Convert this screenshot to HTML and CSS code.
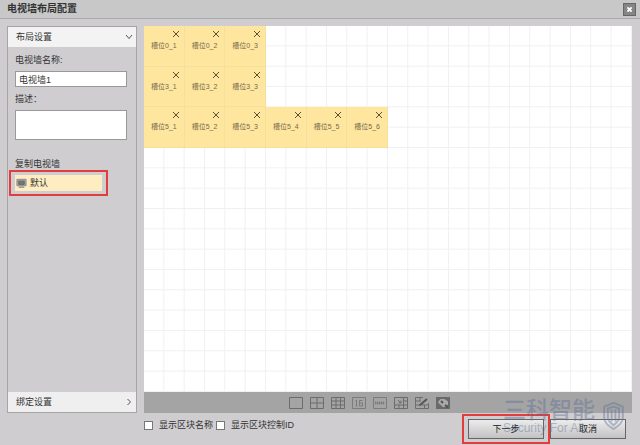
FILE: index.html
```html
<!doctype html>
<html lang="zh-CN">
<head>
  <meta charset="utf-8">
  <title>电视墙布局配置</title>
  <link rel="stylesheet" href="styles.css">
</head>
<body>
  <div class="dialog">
    <header class="titlebar">
      <h1>电视墙布局配置</h1>
      <button type="button" class="close" aria-label="关闭">
        <svg viewBox="0 0 12 12"><path d="M3.7 3.7l4.6 4.6M8.3 3.7L3.7 8.3"/></svg>
      </button>
    </header>

    <div class="main">
      <aside class="sidebar">
        <button type="button" class="section open">布局设置
          <svg viewBox="0 0 8 8"><path d="M1 2l3 3.5L7 2"/></svg>
        </button>
        <form class="settings">
          <label for="wallName">电视墙名称:</label>
          <input type="text" id="wallName" value="电视墙1">
          <label for="wallDesc">描述：</label>
          <textarea id="wallDesc"></textarea>
          <p class="copyLabel">复制电视墙</p>
          <div class="copyList marked">
            <button type="button" class="copyItem">
              <svg viewBox="0 0 12 10"><path class="screen" d="M1 1h10v7H1z"/><path class="lines" d="M3 3h6v3.500H3zM3 9.500h6"/></svg>
              默认
            </button>
          </div>
        </form>
        <button type="button" class="section">绑定设置
          <svg viewBox="0 0 8 8"><path d="M2.5 1L5.5 4l-3 3"/></svg>
        </button>
      </aside>

      <section class="wall">
        <div class="grid">
          <div class="slot first"><button type="button" aria-label="删除"><svg viewBox="0 0 8 8"><path d="M1 1l6 6M7 1L1 7"/></svg></button><span>槽位0_1</span></div>
          <div class="slot"><button type="button" aria-label="删除"><svg viewBox="0 0 8 8"><path d="M1 1l6 6M7 1L1 7"/></svg></button><span>槽位0_2</span></div>
          <div class="slot"><button type="button" aria-label="删除"><svg viewBox="0 0 8 8"><path d="M1 1l6 6M7 1L1 7"/></svg></button><span>槽位0_3</span></div>

          <div class="slot first"><button type="button" aria-label="删除"><svg viewBox="0 0 8 8"><path d="M1 1l6 6M7 1L1 7"/></svg></button><span>槽位3_1</span></div>
          <div class="slot"><button type="button" aria-label="删除"><svg viewBox="0 0 8 8"><path d="M1 1l6 6M7 1L1 7"/></svg></button><span>槽位3_2</span></div>
          <div class="slot"><button type="button" aria-label="删除"><svg viewBox="0 0 8 8"><path d="M1 1l6 6M7 1L1 7"/></svg></button><span>槽位3_3</span></div>

          <div class="slot first"><button type="button" aria-label="删除"><svg viewBox="0 0 8 8"><path d="M1 1l6 6M7 1L1 7"/></svg></button><span>槽位5_1</span></div>
          <div class="slot"><button type="button" aria-label="删除"><svg viewBox="0 0 8 8"><path d="M1 1l6 6M7 1L1 7"/></svg></button><span>槽位5_2</span></div>
          <div class="slot"><button type="button" aria-label="删除"><svg viewBox="0 0 8 8"><path d="M1 1l6 6M7 1L1 7"/></svg></button><span>槽位5_3</span></div>
          <div class="slot"><button type="button" aria-label="删除"><svg viewBox="0 0 8 8"><path d="M1 1l6 6M7 1L1 7"/></svg></button><span>槽位5_4</span></div>
          <div class="slot"><button type="button" aria-label="删除"><svg viewBox="0 0 8 8"><path d="M1 1l6 6M7 1L1 7"/></svg></button><span>槽位5_5</span></div>
          <div class="slot"><button type="button" aria-label="删除"><svg viewBox="0 0 8 8"><path d="M1 1l6 6M7 1L1 7"/></svg></button><span>槽位5_6</span></div>
        </div>

        <div class="toolbar">
          <button type="button" aria-label="1 分屏"><svg viewBox="0 0 14 12"><path d="M.5 .5h13v11H.5z"/></svg></button>
          <button type="button" aria-label="4 分屏"><svg viewBox="0 0 14 12"><path d="M.5 .5h13v11H.5zM7 .5v11M.5 6h13"/></svg></button>
          <button type="button" aria-label="9 分屏"><svg viewBox="0 0 14 12"><path d="M.5 .5h13v11H.5zM5 .5v11M9.500 .5v11M.5 4h13M.5 8h13"/></svg></button>
          <button type="button" aria-label="16 分屏"><svg viewBox="0 0 14 12"><path class="thin" d="M.5 .5h13v11H.5zM4.500 3v6M3.500 3.500h1M3.500 9h2M10.500 3.500h-3v5.500h3V6h-3"/></svg></button>
          <button type="button" aria-label="自定义分屏"><svg viewBox="0 0 14 12"><path class="thin" d="M.5 .5h13v11H.5zM2.500 4.500v3M4.500 4.500v3M6.500 4.500v3M8.500 4.500v3M10.500 4.500v3M2.500 6h9"/></svg></button>
          <button type="button" aria-label="合并"><svg viewBox="0 0 14 12"><path d="M.5 .5h13v11H.5zM9.500 .5v11M5 8v3.500M.5 8h13M9.500 4h4M4 3l3 3M7 3.500V6H4.500"/></svg></button>
          <button type="button" aria-label="编辑"><svg viewBox="0 0 14 12"><path d="M8 .5H.5v11h13V6M5 .5v4M.5 4h5M.5 8h4M9.500 8v3.500M7 8h6.500"/><path class="bold" d="M4.500 8.500L12 2"/></svg></button>
          <button type="button" aria-label="清空"><svg viewBox="0 0 14 12"><path class="fill" d="M0 0h14v12H0z"/><path class="cut" d="M2 5l2.500-3h4L12 4.500v3L9 10H7L3 6.500z"/><path class="bold" d="M5 4l2 2M9 8l3 2.500"/></svg></button>
        </div>
      </section>
    </div>

    <footer class="footer">
      <div class="options">
        <input type="checkbox" id="showName"><label for="showName">显示区块名称</label>
        <input type="checkbox" id="showId"><label for="showId">显示区块控制ID</label>
      </div>
      <div class="actions">
        <div class="marked"><button type="button">下一步</button></div>
        <button type="button">取消</button>
      </div>
    </footer>

    <div class="watermark">
      <div>
        <strong>三科智能</strong>
        <small>Security For All</small>
      </div>
      <svg viewBox="0 0 24 30"><path d="M12 1l10 4v12c0 5-4 8-10 12C6 25 2 22 2 17V5z"/><path d="M12 5l6 2v10c0 3-2 5-6 8-4-3-6-5-6-8V7zM10 8v13M14 8v13"/></svg>
    </div>
  </div>
</body>
</html>
```

FILE: styles.css
```css
* {
  box-sizing: border-box;
}

body {
  margin: 0;
  background: #cfcdcf;
  color: #333;
  font: 9px/12px "Liberation Sans", "Noto Sans CJK SC", sans-serif;
}

button, input, textarea {
  font: inherit;
  color: inherit;
  margin: 0;
}

button {
  padding: 0;
  border: 0;
  background: none;
}

svg {
  display: block;
  fill: none;
  stroke: #555;
}

.dialog {
  position: relative;
  display: flex;
  flex-direction: column;
  min-height: 100vh;
}

.titlebar {
  display: flex;
  justify-content: space-between;
  align-items: center;
  height: 19px;
  padding: 0 4px 0 7px;
  background: #c8c8c8;
  border-bottom: 1px solid #aaa;
}

.titlebar h1 {
  margin: 0;
  font-size: 10px;
  line-height: 16px;
}

.close {
  width: 13px;
  height: 13px;
  border: 1px solid #666;
  background: #858585;
}

.close svg {
  stroke: #fff;
  stroke-width: 2;
}

.main {
  flex: 1;
  display: flex;
  gap: 7px;
  padding: 7px 8px 0 7px;
}

/* left panel */

.sidebar {
  flex: 0 0 130px;
  display: flex;
  flex-direction: column;
  border: 1px solid #a5a5a7;
}

.section {
  display: flex;
  justify-content: space-between;
  align-items: center;
  height: 20px;
  padding: 0 3px 0 8px;
  background: #efeff0;
}

.section.open {
  background: #f3f3f3;
}

.section svg {
  width: 8px;
  height: 8px;
}

.settings {
  flex: 1;
  display: flex;
  flex-direction: column;
  padding: 7px 9px 0 7px;
}

.settings label {
  margin-bottom: 5px;
}

.settings input,
.settings textarea {
  width: 100%;
  border: 1px solid #999;
  background: #fff;
  border-radius: 0;
}

.settings input {
  height: 16px;
  padding: 0 3px;
  margin-bottom: 6px;
}

.settings textarea {
  height: 30px;
  resize: none;
  margin-bottom: 18px;
}

.copyLabel {
  margin: 0 0 5px;
}

/* red frame that draws attention to a control */
.marked {
  position: relative;
}

.marked::after {
  content: "";
  position: absolute;
  inset: -5px -6px;
  border: 2px solid #e23c3c;
  pointer-events: none;
}

.copyList {
  width: 87px;
}

.copyItem {
  display: flex;
  align-items: center;
  gap: 3px;
  width: 100%;
  height: 16px;
  padding: 0 1px;
  background: #feedc0;
}

.copyItem svg {
  width: 11px;
  height: 10px;
}

.screen {
  fill: #aaa;
  stroke: #888;
}

.lines {
  fill: #777;
  stroke: #666;
}

/* wall canvas, 12 x 9 slots */

.wall {
  flex: 1;
  display: flex;
  flex-direction: column;
}

.grid {
  flex: 1;
  display: grid;
  grid-template-columns: repeat(12, 1fr);
  grid-template-rows: repeat(9, 1fr);
  background-color: #fff;
  background-image:
    linear-gradient(to left, #f0f0f1 1px, transparent 1px),
    linear-gradient(to top, #f0f0f1 1px, transparent 1px);
  background-size: calc(100% / 24) calc(100% / 18);
}

.slot {
  display: flex;
  flex-direction: column;
  background: #ffe69f;
  border-right: 1px solid #f6df9c;
  border-bottom: 1px solid #f6df9c;
  color: #756a4c;
  font-size: 7px;
  line-height: 10px;
  text-align: center;
}

.slot.first {
  grid-column-start: 1;
}

.slot button {
  align-self: flex-end;
  margin: 4px 4px 3px 0;
}

.slot svg {
  width: 8px;
  height: 8px;
  stroke: #5b5138;
}

.toolbar {
  display: flex;
  justify-content: center;
  align-items: center;
  gap: 7px;
  height: 21px;
  padding-right: 38px;
  background: #a4a4a5;
}

.toolbar svg {
  width: 14px;
  height: 12px;
  stroke: #6c6c6c;
}

.toolbar .thin {
  stroke: #7c7c7c;
}

.toolbar .bold {
  stroke: #555;
  stroke-width: 2;
}

.toolbar .fill {
  fill: #6a6a6a;
  stroke: none;
}

.toolbar .cut {
  fill: #aaa;
  stroke: none;
}

/* bottom bar */

.footer {
  display: flex;
  justify-content: space-between;
  padding: 6px 14px 6px 144px;
}

.options {
  display: flex;
  align-items: center;
  height: 12px;
}

.options input {
  appearance: none;
  width: 9px;
  height: 9px;
  margin-right: 6px;
  border: 1px solid #777;
  background: #fff;
}

.options label {
  margin-right: 3px;
}

.actions {
  display: flex;
  gap: 6px;
}

.actions button {
  display: block;
  width: 76px;
  height: 20px;
  border: 1px solid #666;
  background: linear-gradient(#ececec, #c2c2c4);
  color: #222;
}

.watermark {
  position: absolute;
  right: 15px;
  bottom: 11px;
  display: flex;
  align-items: center;
  gap: 7px;
  color: #5a6b94;
  opacity: .4;
  pointer-events: none;
}

.watermark strong,
.watermark small {
  display: block;
  white-space: nowrap;
}

.watermark strong {
  font-size: 23px;
  font-weight: 500;
  line-height: 24px;
}

.watermark small {
  font-size: 12px;
  line-height: 12px;
}

.watermark svg {
  width: 23px;
  height: 28px;
  stroke: #5a6b94;
  stroke-width: 2;
}
```
